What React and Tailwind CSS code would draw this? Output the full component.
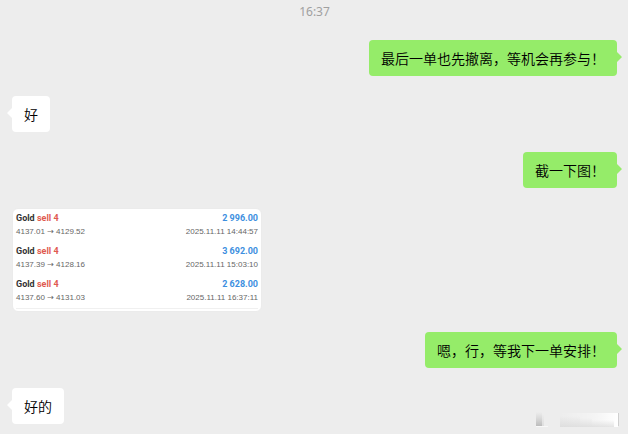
const trades = [
    { symbol: 'Gold', side: 'sell 4', profit: '2 996.00', open: '4137.01', close: '4129.52', time: '2025.11.11 14:44:57' },
    { symbol: 'Gold', side: 'sell 4', profit: '3 692.00', open: '4137.39', close: '4128.16', time: '2025.11.11 15:03:10' },
    { symbol: 'Gold', side: 'sell 4', profit: '2 628.00', open: '4137.60', close: '4131.03', time: '2025.11.11 16:37:11' },
];

const messages = [
    { id: 1, mine: true, text: '最后一单也先撤离，等机会再参与！' },
    { id: 2, mine: false, text: '好' },
    { id: 3, mine: true, text: '截一下图！' },
    { id: 4, mine: false, trades },
    { id: 5, mine: true, text: '嗯，行，等我下一单安排！' },
    { id: 6, mine: false, text: '好的' },
];

function Bubble({ mine, text }) {
    return (
        <div className={`relative rounded px-3 py-2 text-sm font-[350] leading-5 text-black ${mine ? 'bg-[#95ec69]' : 'bg-white'}`}>
            <p>{text}</p>
            <svg
                viewBox="0 0 5 10"
                className={`absolute top-3 h-[10px] w-[5px] ${mine ? 'left-full text-[#95ec69]' : 'right-full rotate-180 text-white'}`}
                fill="currentColor"
                aria-hidden="true"
            >
                <path d="M0 0 L4.5 4.4 Q5 5 4.5 5.6 L0 10 Z" />
            </svg>
        </div>
    );
}

function TradeCard({ trades }) {
    return (
        <div className="flex h-[104px] w-[250px] flex-col rounded-md border border-[#ebebeb] bg-white px-[3px] pb-[2px] pt-[2px]">
            <ul className="flex flex-1 flex-col gap-[6px] border-b border-[#f0f0f0]">
                {trades.map((trade) => (
                    <li key={trade.time}>
                        <div className="flex justify-between font-['Roboto',sans-serif] text-[9px] font-bold leading-[14px]">
                            <span className="text-[#333]">
                                {trade.symbol} <span className="text-[#df5a50]">{trade.side}</span>
                            </span>
                            <span className="text-[#3d8fe0]">{trade.profit}</span>
                        </div>
                        <div className="flex justify-between font-['Liberation_Sans','DejaVu_Sans',sans-serif] text-[8px] leading-[13px] text-[#666]">
                            <span>
                                {trade.open} <span className="font-['DejaVu_Sans',sans-serif]">→</span> {trade.close}
                            </span>
                            <time>{trade.time}</time>
                        </div>
                    </li>
                ))}
            </ul>
        </div>
    );
}

// faded stamp in the corner of the chat
function Smudge() {
    return (
        <svg viewBox="0 0 92 24" className="absolute bottom-0 right-1 h-6 w-[92px]" aria-hidden="true">
            <defs>
                <linearGradient id="dark" x1="0" y1="0" x2="0" y2="1">
                    <stop offset="0" stopColor="#c4c4c4" stopOpacity="0" />
                    <stop offset="1" stopColor="#bcbcbc" />
                </linearGradient>
                <linearGradient id="light" x1="0" y1="0" x2="1" y2="0">
                    <stop offset="0" stopColor="#fff" stopOpacity="0" />
                    <stop offset="0.6" stopColor="#fff" stopOpacity="0.4" />
                    <stop offset="1" stopColor="#fff" />
                </linearGradient>
                <linearGradient id="shade" x1="0" y1="0" x2="0" y2="1">
                    <stop offset="0" stopColor="#d4d4d4" stopOpacity="0" />
                    <stop offset="1" stopColor="#d4d4d4" stopOpacity="0.6" />
                </linearGradient>
            </defs>
            <rect x="4" y="2" width="6" height="14" fill="url(#dark)" />
            <rect x="10" y="4" width="2" height="12" fill="url(#shade)" />
            <rect x="4" y="16" width="12" height="1" fill="#f8f8f8" />
            <rect x="28" y="3" width="58" height="14" fill="url(#light)" />
            <rect x="28" y="6" width="20" height="11" fill="url(#shade)" />
            <rect x="48" y="8" width="12" height="9" fill="url(#shade)" />
            <rect x="60" y="10" width="22" height="7" fill="url(#shade)" />
            <rect x="86" y="3" width="1" height="13" fill="#cfcfcf" />
        </svg>
    );
}

export default function App() {
    return (
        <main className="relative min-h-screen bg-[#ededed] pb-[10px] pl-3 pr-[11px] pt-1 font-['Noto_Sans_CJK_SC',sans-serif]">
            <time className="block text-center font-['Noto_Sans',sans-serif] text-xs leading-4 text-[#a0a0a0]">16:37</time>
            <ul className="mt-5 flex flex-col gap-5">
                {messages.map((message) => (
                    <li key={message.id} className={`flex ${message.mine ? 'justify-end' : 'justify-start'}`}>
                        {message.trades ? <TradeCard trades={message.trades} /> : <Bubble mine={message.mine} text={message.text} />}
                    </li>
                ))}
            </ul>
            <Smudge />
        </main>
    );
}
